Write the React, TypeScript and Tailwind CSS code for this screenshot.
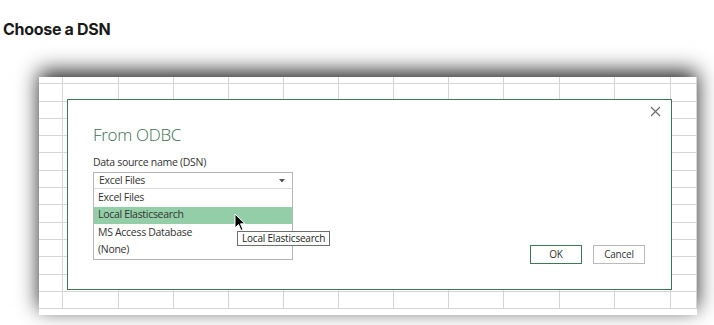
const cols = [24, 56, 55, 55, 55, 55, 55, 55, 55, 56, 55, 56, 26];
const rows = [7, 18, 17, 17, 17, 18, 17, 17, 18, 17, 17, 18, 17, 17];

const options = ["Excel Files", "Local Elasticsearch", "MS Access Database", "(None)"];

const SheetGrid = () => (
  <div className="flex flex-col">
    {rows.map((h, r) => (
      <div key={r} className="flex" style={{ height: h }}>
        {cols.map((w, c) => (
          <div
            key={c}
            className="border-r border-b border-[#d4d4d4] shrink-0"
            style={{ width: w }}
          />
        ))}
      </div>
    ))}
  </div>
);

const Cursor = () => (
  <svg width="12" height="19" viewBox="0 0 12 19" className="absolute left-[166px] top-[113px]">
    <path d="M1 1 L1 15 L4.5 11.5 L7 17.5 L9 16.5 L6.5 10.8 L11 10.8 Z" fill="#000" stroke="#fff" strokeWidth="1" strokeLinejoin="round" />
  </svg>
);

export default function App() {
  return (
    <div className="w-[714px] h-[325px] bg-white overflow-hidden">
      <div className="pt-[19px] pl-[3px] text-[16px] font-bold text-[#1a1a1a] tracking-[-0.3px] font-['Inter',sans-serif] leading-[20px]">
        Choose a DSN
      </div>

      <div className="ml-[39px] mt-[38px] w-[658px] h-[238px] bg-white relative overflow-hidden shadow-[0_-6px_20px_rgba(0,0,0,0.85)]">
        <SheetGrid />

        {/* dialog window */}
        <div className="absolute left-[28px] top-[22px] w-[605px] h-[191px] bg-white border border-[#3f7657] flex flex-col font-['Open_Sans',sans-serif]">
          <div className="flex justify-end pt-[6px] pr-[10px] h-[20px]">
            <svg width="11" height="11" viewBox="0 0 11 11">
              <path d="M1 1 L10 10 M10 1 L1 10" stroke="#6b6b6b" strokeWidth="1.2" />
            </svg>
          </div>

          <div className="pl-[25px] pt-[3px] text-[17px] font-light text-[#3e6d54] leading-[24px] tracking-[-0.3px]">
            From ODBC
          </div>
          <div className="pl-[25px] pt-[8px] text-[10.5px] text-[#333] leading-[14px] tracking-[-0.3px]">
            Data source name (DSN)
          </div>

          <div className="ml-[25px] mt-[3px] w-[200px] h-[18px] border border-[#b5b5b5] flex items-center justify-between pl-[5px] pr-[7px] text-[10.5px] text-[#333] tracking-[-0.3px]">
            <span>Excel Files</span>
            <svg width="6" height="4" viewBox="0 0 6 4">
              <path d="M0 0 H6 L3 3.5 Z" fill="#555" />
            </svg>
          </div>

          <div className="flex-1" />

          <div className="flex justify-end gap-[11px] pr-[26px] pb-[25px]">
            <div className="w-[52px] h-[19px] border-[1.5px] border-[#3f7657] flex items-center justify-center text-[10px] text-[#333] tracking-[-0.2px]">
              OK
            </div>
            <div className="w-[52px] h-[19px] border border-[#b9b9b9] flex items-center justify-center text-[10px] text-[#333] tracking-[-0.2px]">
              Cancel
            </div>
          </div>

          {/* dropdown list */}
          <div className="absolute left-[25px] top-[88px] w-[200px] bg-white border border-[#b5b5b5] border-t-[#d9d9d9] text-[10.5px] text-[#333] tracking-[-0.3px]">
            {options.map((o, i) => (
              <div
                key={o}
                className={`h-[17.5px] flex items-center pl-[4px] ${i === 1 ? "bg-[#93cea8]" : ""}`}
              >
                {o}
              </div>
            ))}
          </div>

          {/* tooltip */}
          <div className="absolute left-[169px] top-[131px] h-[15px] px-[4px] bg-white border border-[#6e6e6e] flex items-center text-[10px] text-[#222] whitespace-nowrap tracking-[-0.2px]">
            Local Elasticsearch
          </div>

          <Cursor />
        </div>
      </div>
    </div>
  );
}
